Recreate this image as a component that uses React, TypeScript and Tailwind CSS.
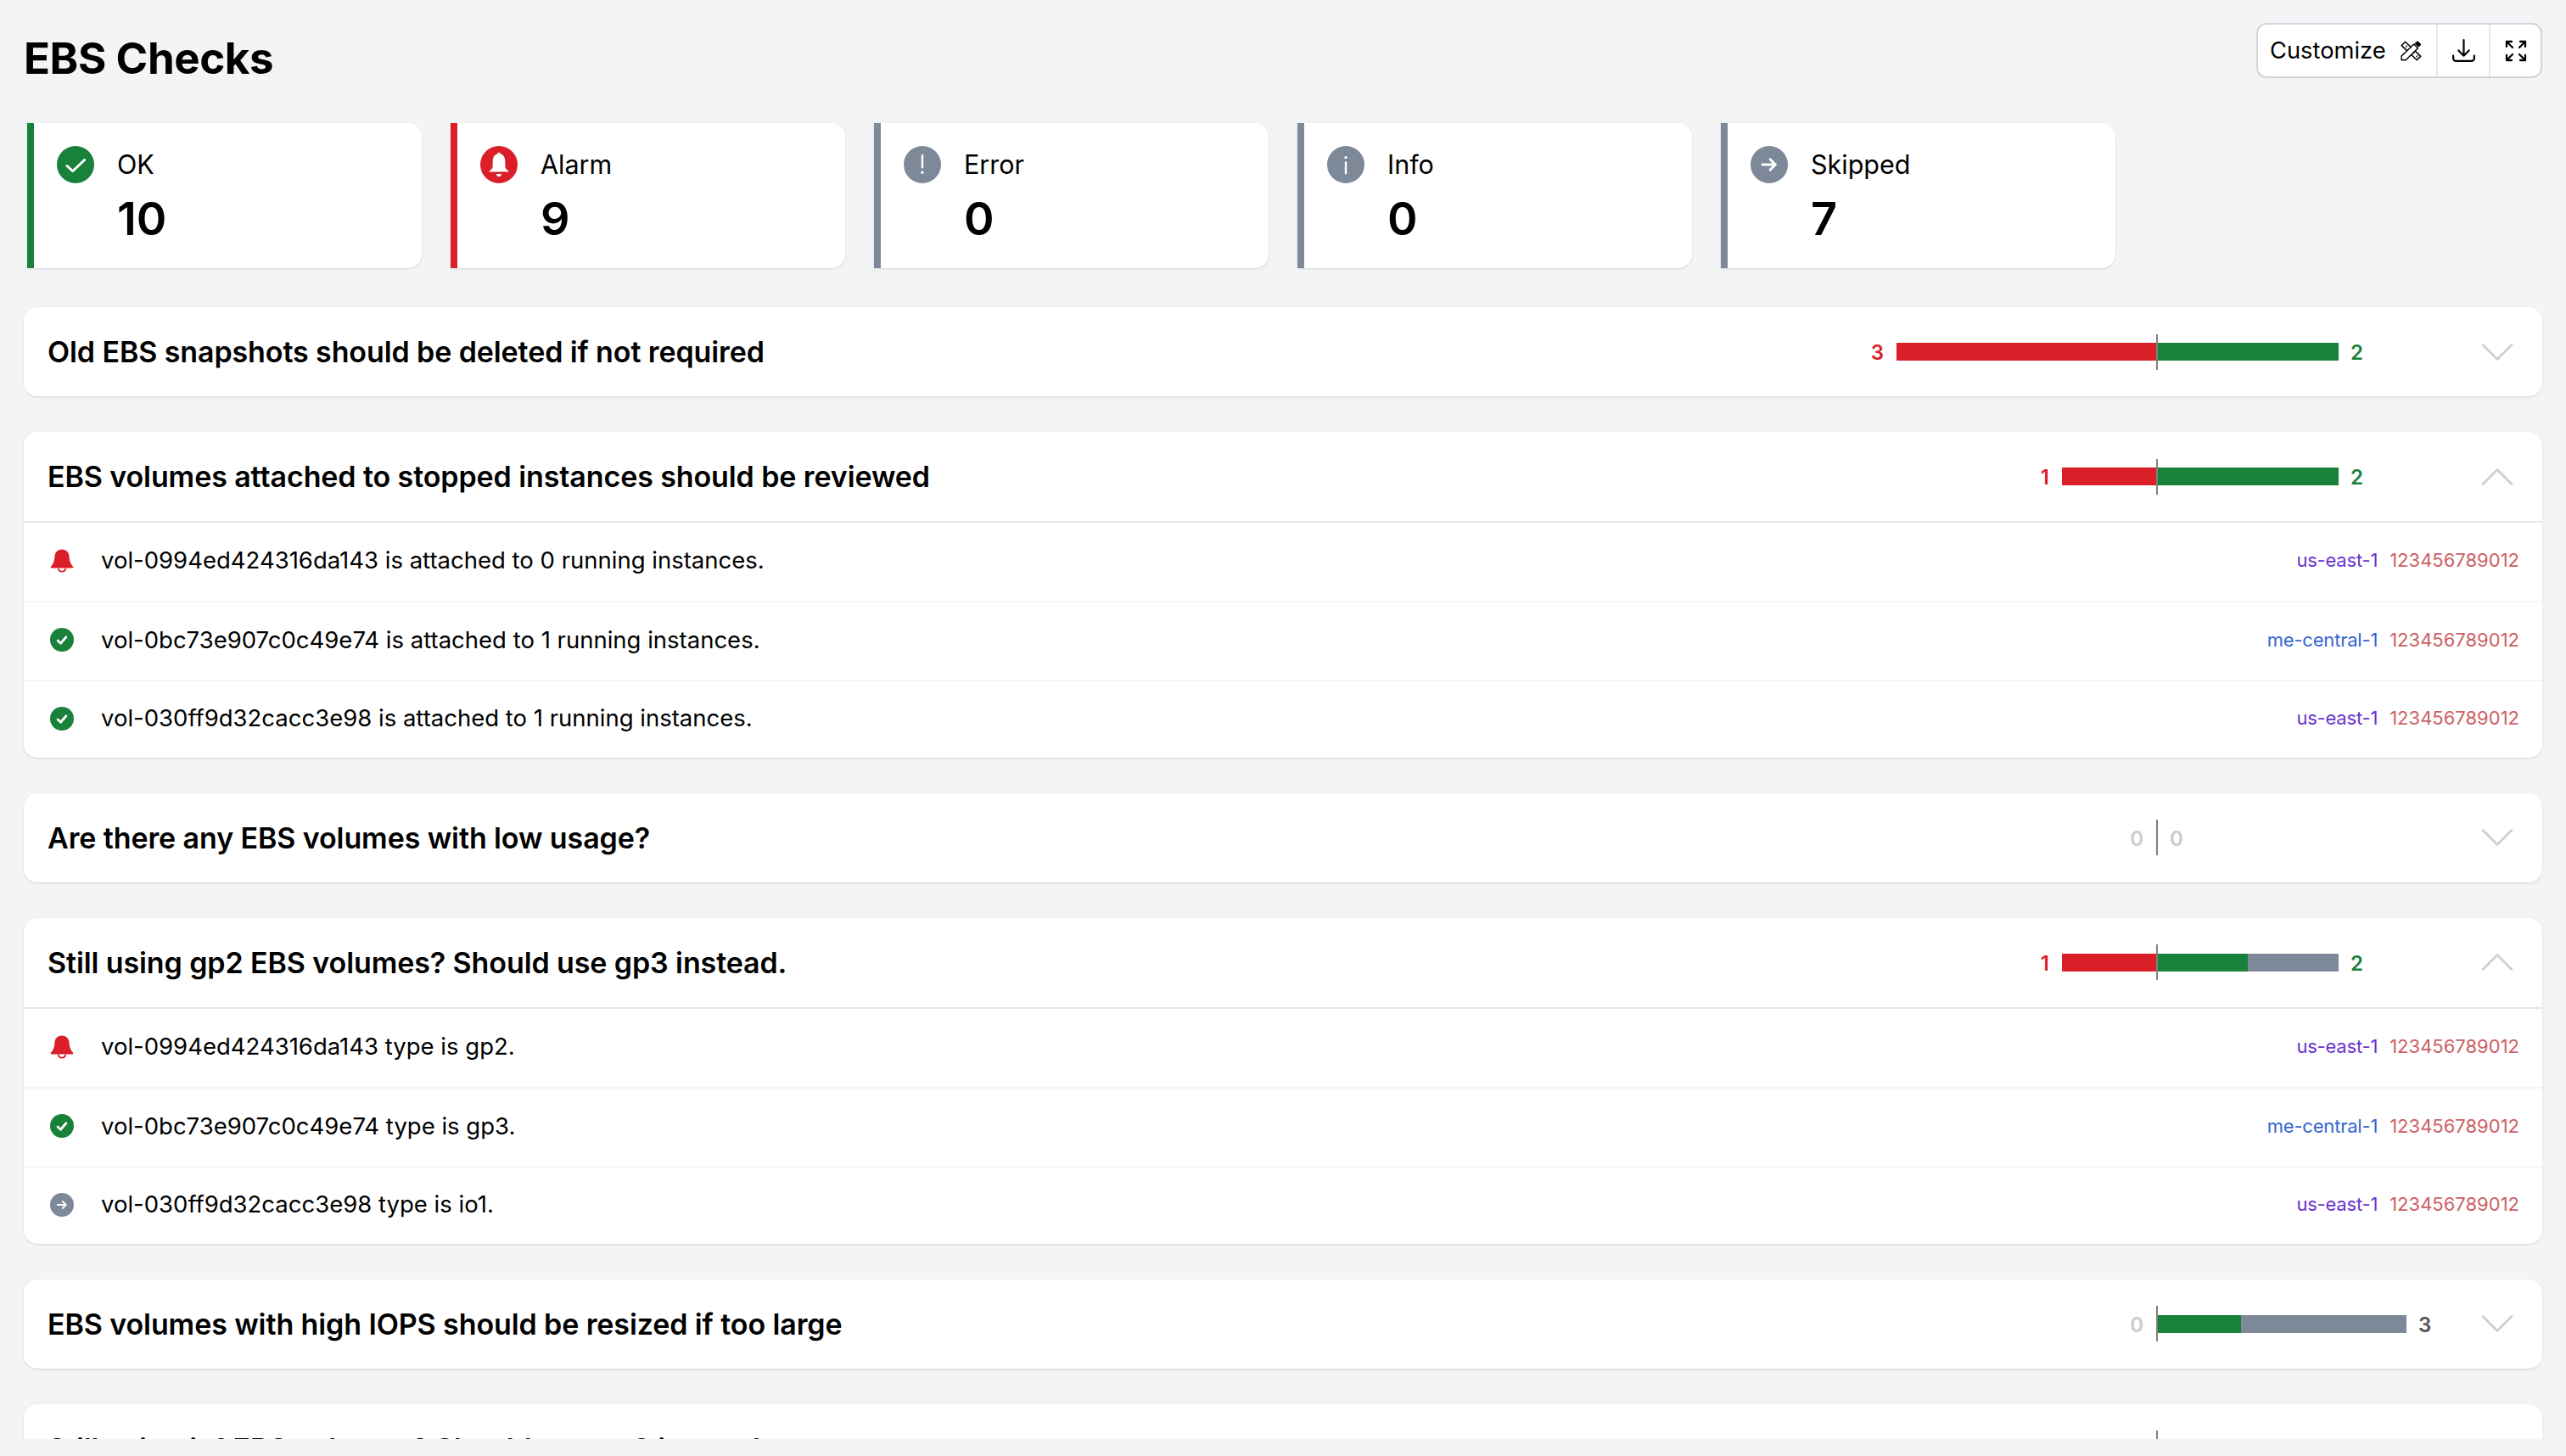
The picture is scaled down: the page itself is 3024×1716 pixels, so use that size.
import React from "react";
import { HiOutlineArrowDownTray, HiOutlineArrowsPointingOut, HiOutlineChevronDown, HiOutlineChevronUp } from "react-icons/hi2";

type Status = "ok" | "alarm" | "error" | "info" | "skip";

function CheckCircle({ small }: { small?: boolean }) {
  return (
    <svg viewBox="0 0 24 24" className="w-full h-full">
      <circle cx="12" cy="12" r="12" fill="#1a813a" />
      {small ? (
        <path d="M7.8 12.8 L10.8 15.6 L16.2 9.2" fill="none" stroke="#fff" strokeWidth="2.4" strokeLinecap="round" strokeLinejoin="round" />
      ) : (
        <path d="M6.5 12.8 L10.2 16.2 L17.8 9" fill="none" stroke="#fff" strokeWidth="1.6" strokeLinecap="round" strokeLinejoin="round" />
      )}
    </svg>
  );
}

function BellCircle() {
  return (
    <svg viewBox="0 0 24 24" className="w-full h-full">
      <circle cx="12" cy="12" r="12" fill="#da1f28" />
      <path d="M12 4.2 C12.5 4.2 12.8 4.5 12.9 5 C15 5.5 16 7.5 16 10 V13 C16 14.5 17 15.5 18.2 16 V16.6 H5.8 V16 C7 15.5 8 14.5 8 13 V10 C8 7.5 9 5.5 11.1 5 C11.2 4.5 11.5 4.2 12 4.2z" fill="#fff" />
      <path d="M10.2 18 H13.8 C13.6 19 12.8 19.8 12 19.8 C11.2 19.8 10.4 19 10.2 18z" fill="#fff" />
    </svg>
  );
}

function BellPlain() {
  return (
    <svg viewBox="0 0 24 24" className="w-full h-full">
      <path d="M12 .8 C7.5 .8 4.8 4 4.6 8.5 C4.4 12 3.5 15.5 .8 18.3 C.3 18.9 .6 19.7 1.5 19.7 H22.5 C23.4 19.7 23.7 18.9 23.2 18.3 C20.5 15.5 19.6 12 19.4 8.5 C19.2 4 16.5 .8 12 .8z" fill="#da1f28" />
      <path d="M8.5 20 C8.5 22 10 23.3 12 23.3 C14 23.3 15.5 22 15.5 20" fill="none" stroke="#da1f28" strokeWidth="1.5" />
    </svg>
  );
}

function GrayCircle({ kind }: { kind: "error" | "info" | "skip" }) {
  return (
    <svg viewBox="0 0 24 24" className="w-full h-full">
      <circle cx="12" cy="12" r="12" fill="#7d8998" />
      {kind === "error" && (
        <>
          <path d="M12 6 V13.8" stroke="#fff" strokeWidth="1.3" strokeLinecap="round" />
          <circle cx="12" cy="17" r="0.9" fill="#fff" />
        </>
      )}
      {kind === "info" && (
        <>
          <circle cx="12" cy="7.4" r="0.9" fill="#fff" />
          <path d="M12 10.6 V17.6" stroke="#fff" strokeWidth="1.3" strokeLinecap="round" />
        </>
      )}
      {kind === "skip" && (
        <path d="M7.6 12 H16 M12.6 8.6 L16 12 L12.6 15.4" fill="none" stroke="#fff" strokeWidth="1.6" strokeLinecap="round" strokeLinejoin="round" />
      )}
    </svg>
  );
}

function DesignIcon() {
  return (
    <svg viewBox="0 0 25 24" width="25" height="24" className="shrink-0">
      <path d="M1.2 5.6 L5.6 1.2 L23.8 18.4 L19.2 22.8 Z" fill="#fff" stroke="#000" strokeWidth="1.5" strokeLinejoin="round" />
      <path d="M8 5.6 L6 7.6 M12 9.4 L10 11.4 M16.4 13.6 L14.4 15.6 M20.4 17.4 L18.4 19.4" stroke="#000" strokeWidth="1.2" />
      <path d="M1.2 18 L15.8 4 L20.6 8.8 L6.2 22.8 H1.2 Z" fill="#fff" stroke="#000" strokeWidth="1.5" strokeLinejoin="round" />
      <path d="M16.6 3.2 L19 .9 C19.6 .4 20.4 .4 21 .9 L23.6 3.4 C24.1 4 24.1 4.8 23.6 5.4 L21.4 7.6 Z" fill="#000" />
    </svg>
  );
}

const cards: { label: string; value: number; border: string; icon: React.ReactNode }[] = [
  { label: "OK", value: 10, border: "border-[#1a813a]", icon: <CheckCircle /> },
  { label: "Alarm", value: 9, border: "border-[#da1f28]", icon: <BellCircle /> },
  { label: "Error", value: 0, border: "border-[#7d8998]", icon: <GrayCircle kind="error" /> },
  { label: "Info", value: 0, border: "border-[#7d8998]", icon: <GrayCircle kind="info" /> },
  { label: "Skipped", value: 7, border: "border-[#7d8998]", icon: <GrayCircle kind="skip" /> },
];

function SummaryCard({ label, value, border, icon }: (typeof cards)[number]) {
  return (
    <div className={`w-[465px] h-[171px] bg-white border-l-[8px] ${border} rounded-r-[16px] shadow-sm pl-[27px] pt-[27px] flex gap-[27px]`}>
      <div className="w-[44px] h-[44px] shrink-0">{icon}</div>
      <div className="flex flex-col">
        <div className="text-[30.5px] leading-[44px] text-black">{label}</div>
        <div className="text-[54px] leading-[56px] mt-[14px] font-semibold text-black">{value}</div>
      </div>
    </div>
  );
}

type Row = { icon: Status; text: string; region: "us-east-1" | "me-central-1" };

function RowIcon({ s }: { s: Status }) {
  if (s === "alarm") return <div className="w-[28px] h-[29px]"><BellPlain /></div>;
  if (s === "ok") return <div className="w-[28px] h-[28px]"><CheckCircle small /></div>;
  return <div className="w-[28px] h-[28px]"><GrayCircle kind="skip" /></div>;
}

function CheckRow({ icon, text, region }: Row) {
  return (
    <div className="h-[92.33px] border-t-[2px] border-[#f3f4f6] first:border-t-0 flex items-center pl-[30px] pr-[27px] pb-[2px] first:pb-[4px]">
      <div className="w-[29px] shrink-0 flex justify-center"><RowIcon s={icon} /></div>
      <div className="ml-[32px] flex-1 text-[27.5px] text-black">{text}</div>
      <div className="flex items-center gap-[14px] text-[22px]">
        <span className={`tracking-[-0.2px] ${region === "us-east-1" ? "text-[#6a35cf]" : "text-[#3566d0]"}`}>{region}</span>
        <span className="text-[#cc5f63]">123456789012</span>
      </div>
    </div>
  );
}

type Section = {
  title: string;
  left: { n: number; bar: number; color: string; text: string };
  right: { n: number; segs: { w: number; color: string }[]; text: string };
  rows?: Row[];
};

const vol1 = "vol-0994ed424316da143";
const vol2 = "vol-0bc73e907c0c49e74";
const vol3 = "vol-030ff9d32cacc3e98";

const sections: Section[] = [
  {
    title: "Old EBS snapshots should be deleted if not required",
    left: { n: 3, bar: 306, color: "bg-[#da1f28]", text: "text-[#da1f28]" },
    right: { n: 2, segs: [{ w: 213, color: "bg-[#1a813a]" }], text: "text-[#1a813a]" },
  },
  {
    title: "EBS volumes attached to stopped instances should be reviewed",
    left: { n: 1, bar: 111, color: "bg-[#da1f28]", text: "text-[#da1f28]" },
    right: { n: 2, segs: [{ w: 213, color: "bg-[#1a813a]" }], text: "text-[#1a813a]" },
    rows: [
      { icon: "alarm", text: `${vol1} is attached to 0 running instances.`, region: "us-east-1" },
      { icon: "ok", text: `${vol2} is attached to 1 running instances.`, region: "me-central-1" },
      { icon: "ok", text: `${vol3} is attached to 1 running instances.`, region: "us-east-1" },
    ],
  },
  {
    title: "Are there any EBS volumes with low usage?",
    left: { n: 0, bar: 0, color: "", text: "text-[#cccccc]" },
    right: { n: 0, segs: [], text: "text-[#cccccc]" },
  },
  {
    title: "Still using gp2 EBS volumes? Should use gp3 instead.",
    left: { n: 1, bar: 111, color: "bg-[#da1f28]", text: "text-[#da1f28]" },
    right: { n: 2, segs: [{ w: 106, color: "bg-[#1a813a]" }, { w: 107, color: "bg-[#7d8998]" }], text: "text-[#1a813a]" },
    rows: [
      { icon: "alarm", text: `${vol1} type is gp2.`, region: "us-east-1" },
      { icon: "ok", text: `${vol2} type is gp3.`, region: "me-central-1" },
      { icon: "skip", text: `${vol3} type is io1.`, region: "us-east-1" },
    ],
  },
  {
    title: "EBS volumes with high IOPS should be resized if too large",
    left: { n: 0, bar: 0, color: "", text: "text-[#cccccc]" },
    right: { n: 3, segs: [{ w: 98, color: "bg-[#1a813a]" }, { w: 195, color: "bg-[#7d8998]" }], text: "text-[#555555]" },
  },
  {
    title: "Still using io1 EBS volumes? Should use gp3 instead.",
    left: { n: 1, bar: 111, color: "bg-[#da1f28]", text: "text-[#da1f28]" },
    right: { n: 2, segs: [{ w: 213, color: "bg-[#1a813a]" }], text: "text-[#1a813a]" },
  },
];

function Chart({ left, right }: Pick<Section, "left" | "right">) {
  return (
    <div className="flex items-center shrink-0">
      <div className="w-[360px] flex justify-end items-center">
        <span className={`text-[24px] font-semibold mr-[15px] mt-[3px] ${left.text}`}>{left.n}</span>
        {left.bar > 0 && <div className={`h-[21px] ${left.color}`} style={{ width: left.bar }} />}
      </div>
      <div className="w-[2px] h-[42px] bg-[#808080]" />
      <div className="w-[373px] flex items-center">
        {right.segs.map((s, i) => (
          <div key={i} className={`h-[21px] ${s.color}`} style={{ width: s.w }} />
        ))}
        <span className={`text-[24px] font-semibold ml-[14px] mt-[3px] ${right.text}`}>{right.n}</span>
      </div>
    </div>
  );
}

function SectionCard({ title, left, right, rows }: Section) {
  return (
    <div className="bg-white rounded-[16px] shadow-sm shrink-0 overflow-hidden">
      <div className={`flex items-center pl-[28px] pr-[26px] ${rows ? "h-[107px] border-b-[2px] border-[#e5e7eb]" : "h-[105px]"}`}>
        <div className="flex-1 text-[34px] font-semibold text-black tracking-[-0.1px]">{title}</div>
        <Chart left={left} right={right} />
        {rows ? (
          <HiOutlineChevronUp size={54} strokeWidth={1.25} className="text-[#cfcfcf] shrink-0" />
        ) : (
          <HiOutlineChevronDown size={54} strokeWidth={1.25} className="text-[#cfcfcf] shrink-0" />
        )}
      </div>
      {rows && <div>{rows.map((r, i) => <CheckRow key={i} {...r} />)}</div>}
    </div>
  );
}

export default function App() {
  return (
    <div className="h-[1716px] bg-[#f3f4f6] font-['Inter',sans-serif]">
      <div className="h-[1696px] overflow-hidden px-[28px] pt-[27px]">
        <div className="flex justify-between items-start h-[118px]">
          <h1 className="text-[51px] leading-[84px] font-bold text-black tracking-[-0.4px]">EBS Checks</h1>
          <div className="flex h-[65px] border-[2px] border-[#d1d5db] rounded-[12px] bg-white text-black overflow-hidden">
            <div className="flex items-center pl-[14px] w-[212px] gap-[17px] border-r-[2px] border-[#e5e7eb]">
              <span className="text-[27.3px] mt-[2px]">Customize</span>
              <DesignIcon />
            </div>
            <div className="flex items-center justify-center w-[62px] border-r-[2px] border-[#e5e7eb]">
              <HiOutlineArrowDownTray size={33} strokeWidth={1.6} />
            </div>
            <div className="flex items-center justify-center w-[59px]">
              <HiOutlineArrowsPointingOut size={32} strokeWidth={1.7} />
            </div>
          </div>
        </div>
        <div className="flex gap-[34px] ml-[4px]">
          {cards.map((c) => (
            <SummaryCard key={c.label} {...c} />
          ))}
        </div>
        <div className="flex flex-col gap-[42px] mt-[46px]">
          {sections.map((s) => (
            <SectionCard key={s.title} {...s} />
          ))}
        </div>
      </div>
    </div>
  );
}
